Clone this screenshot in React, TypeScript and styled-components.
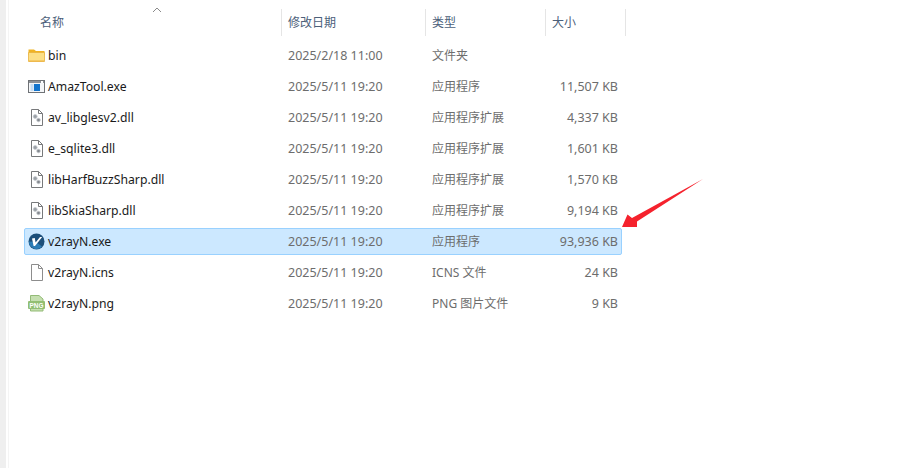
import React from 'react';
import styled, { createGlobalStyle } from 'styled-components';

const GlobalStyle = createGlobalStyle`
  html, body {
    margin: 0;
    padding: 0;
    background: #fff;
  }
`;

const Page = styled.div`
  position: relative;
  display: flex;
  width: 924px;
  height: 468px;
  overflow: hidden;
  background: #fff;
  font-family: 'Noto Sans', 'Noto Sans CJK SC', sans-serif;
  font-size: 12px;
`;

const Gutter = styled.div`
  width: 6px;
  margin-right: 2px;
  background: #efefef;
  box-shadow: 2px 0 0 #fff, 3px 0 0 #f4f4f4;
  flex: none;
`;

const Explorer = styled.div`
  display: flex;
  flex-direction: column;
  padding: 9px 0 0 16px;
`;

const HeaderRow = styled.div`
  position: relative;
  display: grid;
  grid-template-columns: 258px 144px 120px 80px;
  height: 27px;
  margin-bottom: 6px;
`;

const HeaderCell = styled.div<{ $first?: boolean }>`
  display: flex;
  align-items: center;
  padding-left: ${p => (p.$first ? '16px' : '6px')};
  border-right: 1px solid #e5e5e5;
  color: #4c607a;
  font-size: 12px;
  line-height: 27px;
  box-sizing: border-box;
  height: 27px;
`;

const SortArrow = styled.svg`
  position: absolute;
  left: 128px;
  top: -2px;
`;

const Rows = styled.div`
  display: flex;
  flex-direction: column;
  gap: 4px;
  width: 598px;
`;

const Row = styled.div<{ $selected?: boolean }>`
  display: grid;
  grid-template-columns: 257px 144px 120px 72px;
  height: 27px;
  box-sizing: border-box;
  align-items: center;
  border: 1px solid ${p => (p.$selected ? '#99d1ff' : 'transparent')};
  border-radius: 2px;
  background: ${p => (p.$selected ? '#cce8ff' : 'transparent')};
`;

const NameCell = styled.div`
  display: flex;
  align-items: center;
  gap: 3px;
  padding-left: 3px;
  color: #1a1a1a;
  font-size: 12.2px;
  white-space: nowrap;
`;

const IconBox = styled.span`
  display: flex;
  width: 17px;
  height: 17px;
  flex: none;
`;

const DateCell = styled.div`
  padding-left: 6px;
  color: #6d6d6d;
  font-size: 12.5px;
  white-space: nowrap;
`;

const KindCell = styled.div`
  padding-left: 6px;
  color: #6d6d6d;
  font-size: 12px;
  line-height: 17px;
  white-space: nowrap;
`;

const SizeCell = styled.div`
  color: #6d6d6d;
  font-size: 12.5px;
  text-align: right;
  white-space: nowrap;
`;

const Arrow = styled.svg`
  position: absolute;
  left: 615px;
  top: 172px;
`;

const FolderIcon = () => (
  <svg width="17" height="17" viewBox="0 0 17 17">
    <path d="M0.5 2.5 H6 L8 4 H16.5 V8 H0.5 Z" fill="#f0b323" />
    <path d="M0.5 5.5 H16.5 V14.5 H0.5 Z" fill="#fcdf86" stroke="#e8b13c" strokeWidth="0.8" />
    <path d="M1 13.5 H16 V14.5 H1 Z" fill="#eeb544" />
  </svg>
);

const ExeIcon = () => (
  <svg width="17" height="17" viewBox="0 0 17 17">
    <rect x="0.5" y="2.5" width="16" height="12" fill="#f4f6f8" stroke="#6f7276" />
    <rect x="1" y="3" width="15" height="2" fill="#8c9096" />
    <rect x="2.5" y="6" width="3" height="7" fill="#c5dcf2" />
    <rect x="6" y="6" width="6" height="7" fill="#1173cc" />
    <rect x="13" y="3" width="2" height="2" fill="#fff" />
  </svg>
);

const DllIcon = () => (
  <svg width="17" height="17" viewBox="-2 0 17 17">
    <path d="M1.5 0.5 H8.5 L12.5 4.5 V16.5 H1.5 Z M8.5 0.5 V4.5 H12.5" fill="#fff" stroke="#77797b" strokeWidth="1" />
    <circle cx="5.2" cy="7.5" r="2" fill="#9aa0a6" stroke="#c8ccd0" strokeWidth="0.8" />
    <circle cx="8.5" cy="11" r="1.8" fill="#83888e" stroke="#c8ccd0" strokeWidth="0.8" />
  </svg>
);

const BlankIcon = () => (
  <svg width="17" height="17" viewBox="-2 0 17 17">
    <path d="M1.5 0.5 H8.5 L12.5 4.5 V16.5 H1.5 Z M8.5 0.5 V4.5 H12.5" fill="#fff" stroke="#8d8d8d" strokeWidth="1" />
  </svg>
);

const V2rayIcon = () => (
  <svg width="17" height="17" viewBox="0 0 17 17">
    <circle cx="8.5" cy="8.5" r="8" fill="#1c4f7a" />
    <path d="M1 8.5 A7.5 7.5 0 0 0 14 13.5 L8 9 Z" fill="#2b7cb5" />
    <path d="M4 5.5 L6.8 5 L7.6 9.5 L12 4 L14.2 4 L7 13 L5.6 13 Z" fill="#fff" />
  </svg>
);

const PngIcon = () => (
  <svg width="17" height="17" viewBox="0 0 17 17">
    <path d="M2.5 0.5 H11 L15 4 V16 H2.5 Z" fill="#c5dfb0" stroke="#93bb77" />
    <rect x="0" y="6" width="17" height="8" rx="1" fill="#93bf73" />
    <text x="8.5" y="12.6" textAnchor="middle" fontSize="6.4" fontWeight="700" fill="#fff" fontFamily="Liberation Sans, sans-serif">PNG</text>
  </svg>
);

type FileRow = {
  name: string;
  date: string;
  kind: string;
  size: string;
  icon: React.ReactNode;
  selected?: boolean;
};

const files: FileRow[] = [
  { name: 'bin', date: '2025/2/18 11:00', kind: '文件夹', size: '', icon: <FolderIcon /> },
  { name: 'AmazTool.exe', date: '2025/5/11 19:20', kind: '应用程序', size: '11,507 KB', icon: <ExeIcon /> },
  { name: 'av_libglesv2.dll', date: '2025/5/11 19:20', kind: '应用程序扩展', size: '4,337 KB', icon: <DllIcon /> },
  { name: 'e_sqlite3.dll', date: '2025/5/11 19:20', kind: '应用程序扩展', size: '1,601 KB', icon: <DllIcon /> },
  { name: 'libHarfBuzzSharp.dll', date: '2025/5/11 19:20', kind: '应用程序扩展', size: '1,570 KB', icon: <DllIcon /> },
  { name: 'libSkiaSharp.dll', date: '2025/5/11 19:20', kind: '应用程序扩展', size: '9,194 KB', icon: <DllIcon /> },
  { name: 'v2rayN.exe', date: '2025/5/11 19:20', kind: '应用程序', size: '93,936 KB', icon: <V2rayIcon />, selected: true },
  { name: 'v2rayN.icns', date: '2025/5/11 19:20', kind: 'ICNS 文件', size: '24 KB', icon: <BlankIcon /> },
  { name: 'v2rayN.png', date: '2025/5/11 19:20', kind: 'PNG 图片文件', size: '9 KB', icon: <PngIcon /> },
];

const App: React.FC = () => {
  return (
    <Page>
      <GlobalStyle />
      <Gutter />
      <Explorer>
        <HeaderRow>
          <HeaderCell $first>名称</HeaderCell>
          <HeaderCell>修改日期</HeaderCell>
          <HeaderCell>类型</HeaderCell>
          <HeaderCell>大小</HeaderCell>
          <SortArrow width="10" height="6" viewBox="0 0 10 6">
            <path d="M1 5 L5 1 L9 5" fill="none" stroke="#8a8a8a" strokeWidth="1" />
          </SortArrow>
        </HeaderRow>
        <Rows>
          {files.map(file => (
            <Row key={file.name} $selected={file.selected}>
              <NameCell>
                <IconBox>{file.icon}</IconBox>
                {file.name}
              </NameCell>
              <DateCell>{file.date}</DateCell>
              <KindCell>{file.kind}</KindCell>
              <SizeCell>{file.size}</SizeCell>
            </Row>
          ))}
        </Rows>
      </Explorer>
      <Arrow width="92" height="60" viewBox="615 172 92 60">
        <path d="M622 227 L627.5 214.5 L632 218 L703 179 L637 221.5 L637 227 Z" fill="#f5222d" />
      </Arrow>
    </Page>
  );
};

export default App;
